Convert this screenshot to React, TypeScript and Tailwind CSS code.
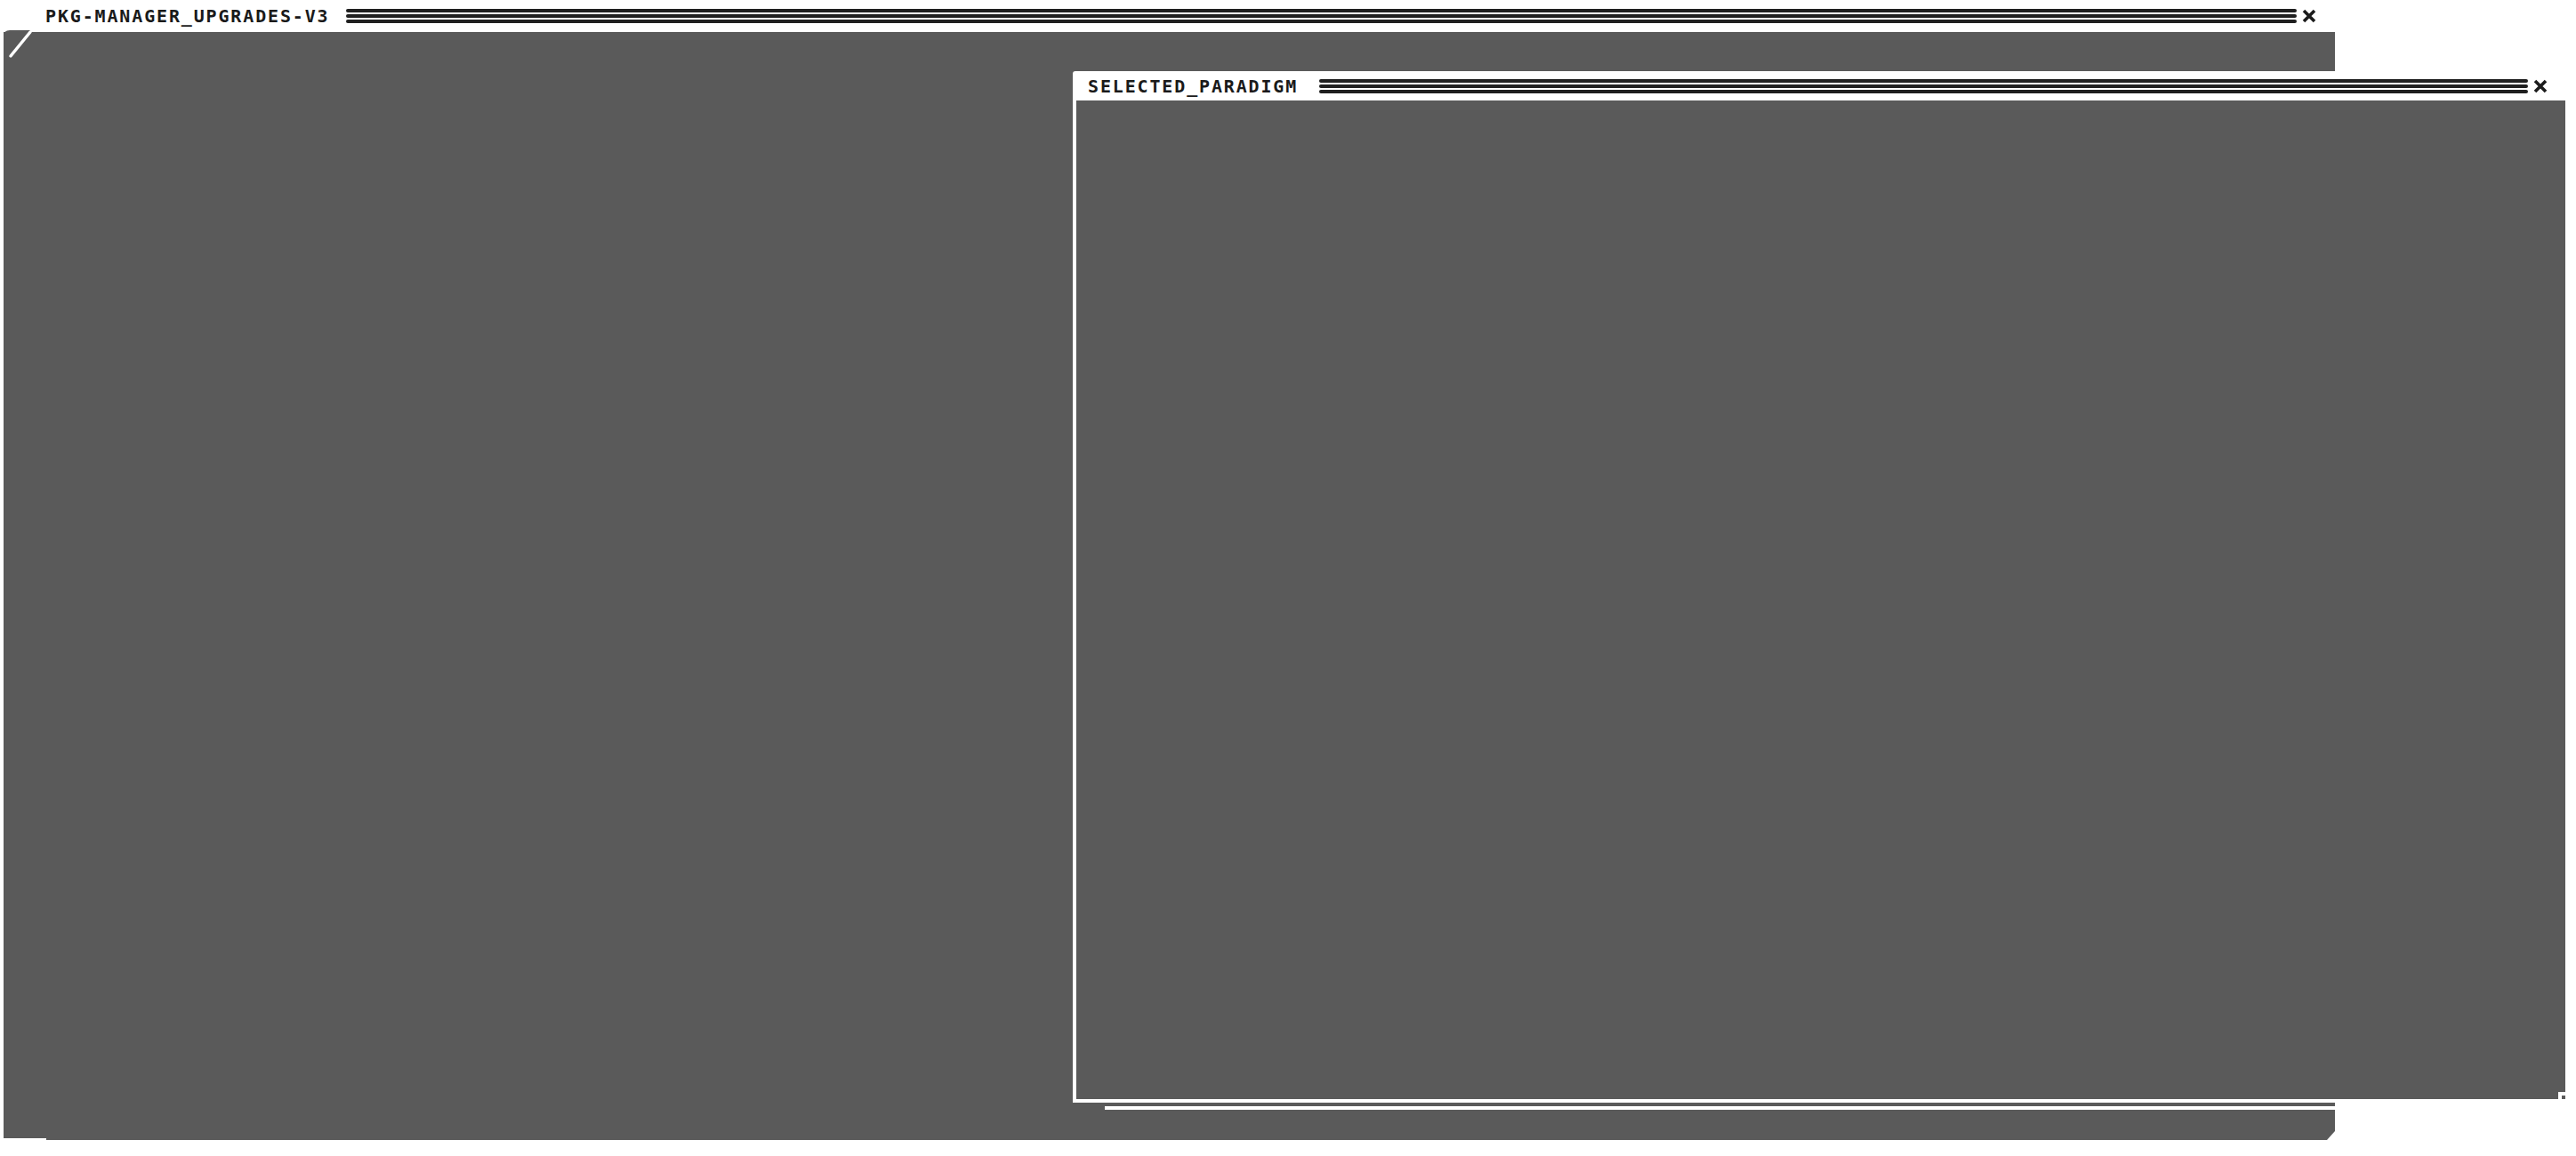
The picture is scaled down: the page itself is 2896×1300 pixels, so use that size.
import React from 'react';

const CloseIcon: React.FC = () => (
  <svg width="16" height="16" viewBox="0 0 16 16" className="shrink-0">
    <path d="M2 2 L14 14 M14 2 L2 14" stroke="#1c1c1c" strokeWidth="3.6" strokeLinecap="butt" />
  </svg>
);

// the triple rule that fills the title bar
const TitleRule: React.FC = () => (
  <div className="flex-1 flex flex-col gap-[2px]">
    <div className="h-[4px] rounded-full bg-[#1f1f1f]" />
    <div className="h-[4px] rounded-full bg-[#1f1f1f]" />
    <div className="h-[4px] rounded-full bg-[#1f1f1f]" />
  </div>
);

const TitleText: React.FC<{ children: React.ReactNode }> = ({ children }) => (
  <span className="text-[20px] leading-none font-bold tracking-[1.85px] text-[#1a1a1a] whitespace-nowrap">
    {children}
  </span>
);

const App: React.FC = () => {
  return (
    <div
      className="relative w-[2896px] h-[1300px] overflow-hidden bg-white"
      style={{ fontFamily: '"DejaVu Sans Mono", "Liberation Mono", monospace' }}
    >
      {/* main window */}
      <div className="flex flex-col w-[2625px]">
        <div className="h-[36px] flex items-center pl-[51px] pr-[21px]">
          <TitleText>PKG-MANAGER_UPGRADES-V3</TitleText>
          <div className="ml-[18px] mr-[6px] flex-1 flex">
            <TitleRule />
          </div>
          <CloseIcon />
        </div>
        <div className="relative ml-[4px]">
          <div className="h-[1246px] bg-[#5a5a5a] [clip-path:polygon(0_0,100%_0,100%_1236px,calc(100%-9px)_100%,48px_100%,48px_1244px,0_1244px)]" />
          {/* corner notch */}
          <svg width="44" height="44" className="absolute left-0 -top-[3px]">
            <path d="M0 8 Q0 1 7 1 L30 1 L30 4 L0 4 Z" fill="#5a5a5a" />
            <path d="M30 3 L8 30" stroke="#ffffff" strokeWidth="3.5" strokeLinecap="round" />
          </svg>
        </div>
      </div>

      {/* selected paradigm window */}
      <div className="absolute left-[1206px] top-[80px] w-[1678px] flex flex-col">
        <div className="h-[33px] bg-white flex items-center pl-[17px] pr-[20px] rounded-tl-[3px]">
          <TitleText>SELECTED_PARADIGM</TitleText>
          <div className="ml-[24px] mr-[6px] flex-1 flex">
            <TitleRule />
          </div>
          <CloseIcon />
        </div>
        <div className="relative h-[1127px] bg-[#5a5a5a] border-l-4 border-b-4 border-white">
          <div className="absolute right-0 bottom-0 w-[8px] h-[8px] bg-white">
            <div className="absolute right-0 bottom-0 w-[4px] h-[4px] bg-[#5a5a5a]" />
          </div>
        </div>
        <div className="mt-[4px] ml-[36px] h-[4px] bg-white" />
      </div>
    </div>
  );
};

export default App;
